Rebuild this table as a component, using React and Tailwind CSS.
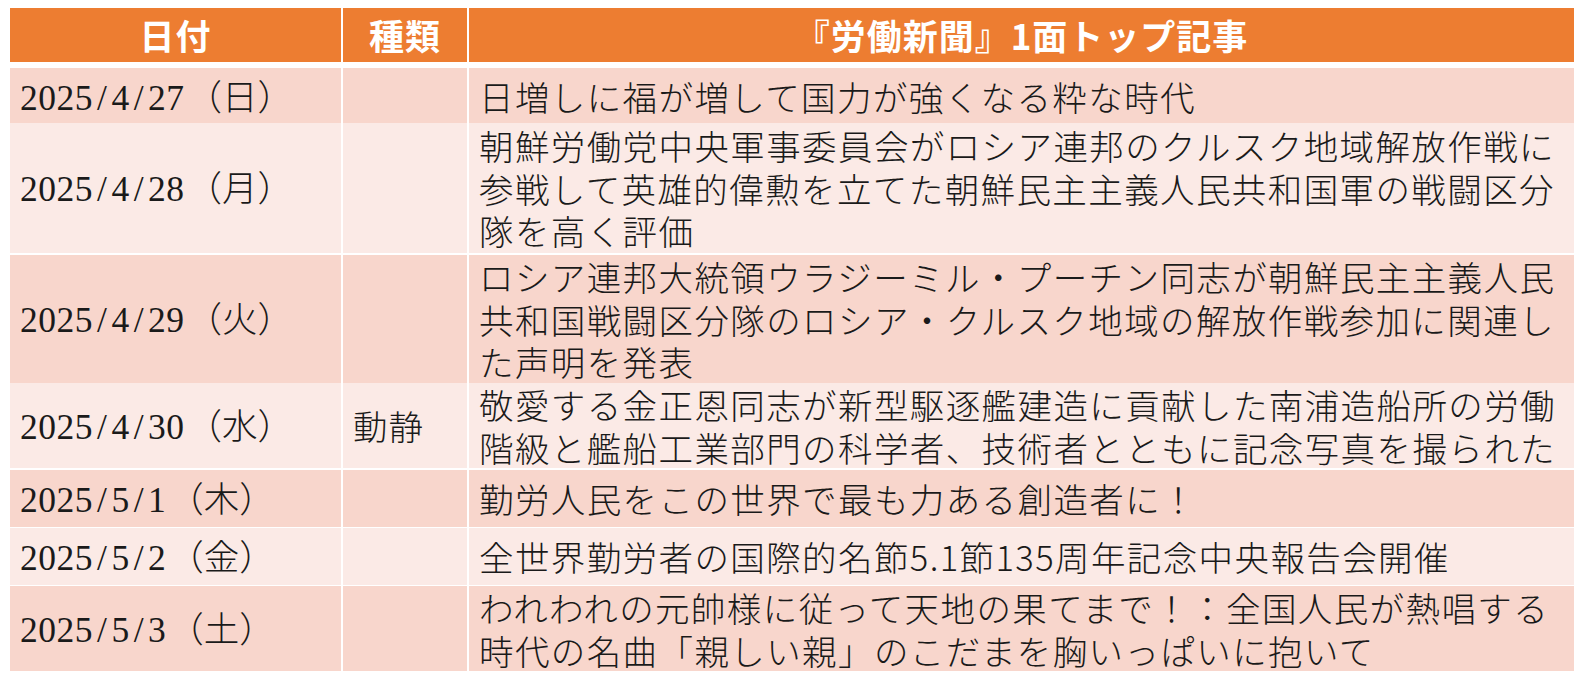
import React from "react";

const rows = [
  { date: "2025/4/27", day: "日", kind: "", h: "h-[53px]", bg: "bg-[#F8D6CC]", lines: ["日増しに福が増して国力が強くなる粋な時代"] },
  { date: "2025/4/28", day: "月", kind: "", h: "h-[130px]", bg: "bg-[#FBEAE6]", lines: ["朝鮮労働党中央軍事委員会がロシア連邦のクルスク地域解放作戦に", "参戦して英雄的偉勲を立てた朝鮮民主主義人民共和国軍の戦闘区分", "隊を高く評価"] },
  { date: "2025/4/29", day: "火", kind: "", h: "h-[126px]", bg: "bg-[#F8D6CC]", lines: ["ロシア連邦大統領ウラジーミル・プーチン同志が朝鮮民主主義人民", "共和国戦闘区分隊のロシア・クルスク地域の解放作戦参加に関連し", "た声明を発表"] },
  { date: "2025/4/30", day: "水", kind: "動静", h: "h-[85px]", bg: "bg-[#FBEAE6]", lines: ["敬愛する金正恩同志が新型駆逐艦建造に貢献した南浦造船所の労働", "階級と艦船工業部門の科学者、技術者とともに記念写真を撮られた"] },
  { date: "2025/5/1", day: "木", kind: "", h: "h-[56px]", bg: "bg-[#F8D6CC]", lines: ["勤労人民をこの世界で最も力ある創造者に！"] },
  { date: "2025/5/2", day: "金", kind: "", h: "h-[56px]", bg: "bg-[#FBEAE6]", lines: ["全世界勤労者の国際的名節5.1節135周年記念中央報告会開催"] },
  { date: "2025/5/3", day: "土", kind: "", h: "h-[84px]", bg: "bg-[#F8D6CC]", lines: ["われわれの元帥様に従って天地の果てまで！：全国人民が熱唱する", "時代の名曲「親しい親」のこだまを胸いっぱいに抱いて"] },
];

const sans = "font-['Noto_Sans_CJK_JP',sans-serif]";
const light = "font-['Noto_Sans_CJK_JP_Light','Noto_Sans_CJK_JP_DemiLight','Noto_Sans_CJK_JP',sans-serif] font-light";
const serif = "font-['Liberation_Serif','Noto_Sans_CJK_JP',serif]";

function DateText({ date, day }) {
  const parts = date.split("/");
  return (
    <span className="whitespace-nowrap">
      <span className={`${serif} tracking-[0.5px]`}>
        {parts.map((p, i) => (
          <React.Fragment key={i}>
            {i > 0 && <span className="px-[4px]">/</span>}
            {p}
          </React.Fragment>
        ))}
      </span>
      <span className={`${light} pl-[2px]`}>（{day}）</span>
    </span>
  );
}

export default function App() {
  return (
    <div className="w-[1577px] h-[674px] bg-white pt-[8px] pl-[10px]">
      <div className="w-[1564px] flex flex-col gap-[2px] text-[#1a1a1a]">
        <div className={`grid grid-cols-[331px_124px_1105px] gap-x-[2px] h-[54px] mb-[4px] ${sans} font-bold text-white text-[35px] tracking-[1px]`}>
          <div className="bg-[#ED7D31] flex items-center justify-center">日付</div>
          <div className="bg-[#ED7D31] flex items-center justify-center">種類</div>
          <div className="bg-[#ED7D31] flex items-center justify-center whitespace-nowrap">『労働新聞』1面トップ記事</div>
        </div>
        {rows.map((r, i) => (
          <div key={i} className={`grid grid-cols-[331px_124px_1105px] gap-x-[2px] ${r.h} text-[34.5px]`}>
            <div className={`${r.bg} flex items-center px-[10px] text-[35.5px]`}>
              <DateText date={r.date} day={r.day} />
            </div>
            <div className={`${r.bg} flex items-center px-[10px] ${light} whitespace-nowrap tracking-[1px]`}>{r.kind}</div>
            <div className={`${r.bg} flex items-center px-[10px] ${light} tracking-[1.4px]`}>
              <div className="leading-[42.5px] whitespace-nowrap">
                {r.lines.map((l, j) => (
                  <div key={j}>{l}</div>
                ))}
              </div>
            </div>
          </div>
        ))}
      </div>
    </div>
  );
}
